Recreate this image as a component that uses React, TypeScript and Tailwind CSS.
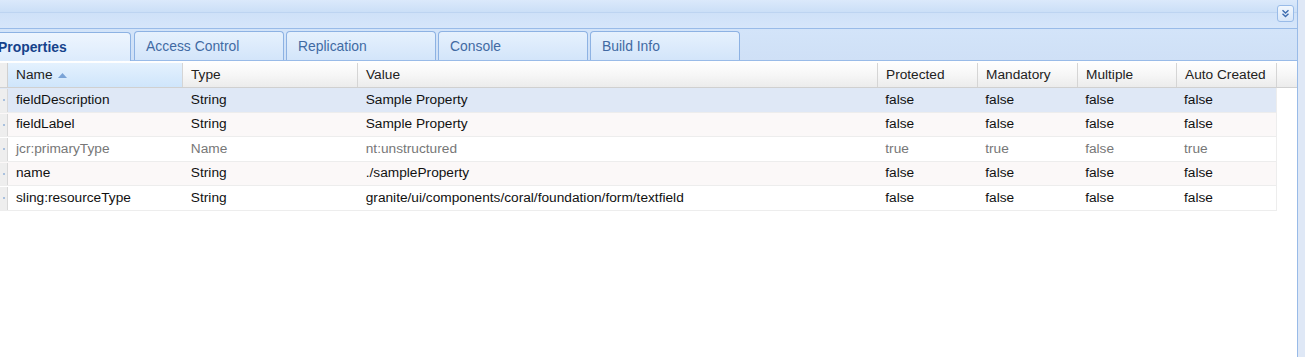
const columns = [
  { key: "name", label: "Name", width: "w-[175px]" },
  { key: "type", label: "Type", width: "w-[175px]" },
  { key: "value", label: "Value", width: "w-[520px]" },
  { key: "protected", label: "Protected", width: "w-[100px]" },
  { key: "mandatory", label: "Mandatory", width: "w-[100px]" },
  { key: "multiple", label: "Multiple", width: "w-[99px]" },
  { key: "autoCreated", label: "Auto Created", width: "w-[100px]" },
];

type Row = Record<string, string> & { muted?: string };

const rows: Row[] = [
  { name: "fieldDescription", type: "String", value: "Sample Property", protected: "false", mandatory: "false", multiple: "false", autoCreated: "false" },
  { name: "fieldLabel", type: "String", value: "Sample Property", protected: "false", mandatory: "false", multiple: "false", autoCreated: "false" },
  { name: "jcr:primaryType", type: "Name", value: "nt:unstructured", protected: "true", mandatory: "true", multiple: "false", autoCreated: "true", muted: "1" },
  { name: "name", type: "String", value: "./sampleProperty", protected: "false", mandatory: "false", multiple: "false", autoCreated: "false" },
  { name: "sling:resourceType", type: "String", value: "granite/ui/components/coral/foundation/form/textfield", protected: "false", mandatory: "false", multiple: "false", autoCreated: "false" },
];

const tabs = ["Access Control", "Replication", "Console", "Build Info"];

function ToggleButton() {
  return (
    <button className="flex h-[17px] w-[17px] items-center justify-center rounded-[3px] border border-[#99bbe8] bg-gradient-to-b from-[#f2f7fd] to-[#d7e6f9]">
      <svg width="9" height="9" viewBox="0 0 9 9" fill="none" stroke="#3d6cb0" strokeWidth="1.4">
        <path d="M1.5 1.2 4.5 4 7.5 1.2" />
        <path d="M1.5 4.8 4.5 7.6 7.5 4.8" />
      </svg>
    </button>
  );
}

export default function App() {
  return (
    <div
      className="flex h-[357px] w-[1305px] overflow-hidden bg-white text-[13.7px]"
      style={{ fontFamily: '"Liberation Sans", Arial, sans-serif' }}
    >
      <div className="flex w-[1297px] flex-col overflow-hidden">
        {/* panel header */}
        <div className="flex h-[29px] flex-col border-b border-[#99bbe8]">
          <div className="h-[13px] border-b border-[#bdd4f1] bg-gradient-to-b from-[#dbe9fb] to-[#cbdff7]" />
          <div className="flex flex-1 items-start justify-end bg-gradient-to-b from-[#cfe1f8] to-[#d6e6fa] pr-[3px]">
            <div className="-mt-[8px]">
              <ToggleButton />
            </div>
          </div>
        </div>

        {/* tab strip */}
        <div className="flex h-[32px] items-end gap-[2px] border-b border-[#99bbe8] bg-gradient-to-b from-[#d3e4f9] to-[#cfe0f6] text-[13.9px]">
          <div className="-ml-[14px] -mb-px mr-[1px] flex h-[29px] w-[145px] items-center rounded-t-[4px] border border-b-0 border-[#8db2e3] bg-gradient-to-b from-[#eef5fe] to-[#dcebfc] pl-[11px] font-bold text-[#15428b]">
            Properties
          </div>
          {tabs.map((t) => (
            <div
              key={t}
              className="flex h-[29px] w-[150px] items-center rounded-t-[4px] border border-b-0 border-[#8db2e3] bg-gradient-to-b from-[#e6f1fd] to-[#d3e5fa] pl-[11px] text-[#416aa3]"
            >
              {t}
            </div>
          ))}
        </div>

        {/* grid header */}
        <div className="flex h-[27px] border-b border-[#d0d0d0] bg-gradient-to-b from-[#ffffff] via-[#f7f7f7] to-[#ececec] pt-[2px] text-[#222]">
          <div className="w-[8px] border-r border-[#d0d0d0] bg-[#eeeeee]" />
          {columns.map((c, i) => (
            <div
              key={c.key}
              className={`${c.width} flex items-center border-r border-[#d5d5d5] pl-[8px] ${
                i === 0 ? "bg-gradient-to-b from-[#e4f1fe] to-[#cfe5fb]" : ""
              }`}
            >
              {c.label}
              {i === 0 && (
                <svg className="ml-[5px]" width="9" height="5" viewBox="0 0 9 5">
                  <path d="M0 5 4.5 0 9 5Z" fill="#7aa3d6" />
                </svg>
              )}
            </div>
          ))}
          <div className="flex-1" />
        </div>

        {/* grid rows */}
        <div className="flex flex-col">
          {rows.map((r, idx) => (
            <div
              key={r.name}
              className={`flex h-[24.5px] w-[1277px] border-b border-r border-[#ededed] pt-px ${
                idx === 0 ? "bg-[#dfe8f6]" : idx % 2 === 1 ? "bg-[#fbf8f8]" : "bg-white"
              } ${r.muted ? "text-[#777777]" : "text-[#111111]"}`}
            >
              <div className="flex w-[8px] items-center justify-end border-r border-[#d8d8d8] bg-[#eeeeee]">
                <div className="mr-[2px] h-[2px] w-[2px] bg-[#a8c0de]" />
              </div>
              {columns.map((c) => (
                <div key={c.key} className={`${c.width} flex items-center pl-[8px]`}>
                  {r[c.key]}
                </div>
              ))}
            </div>
          ))}
        </div>
      </div>
      <div className="w-[8px] border-l border-[#99bbe8] bg-[#dfe8f6]" />
    </div>
  );
}
